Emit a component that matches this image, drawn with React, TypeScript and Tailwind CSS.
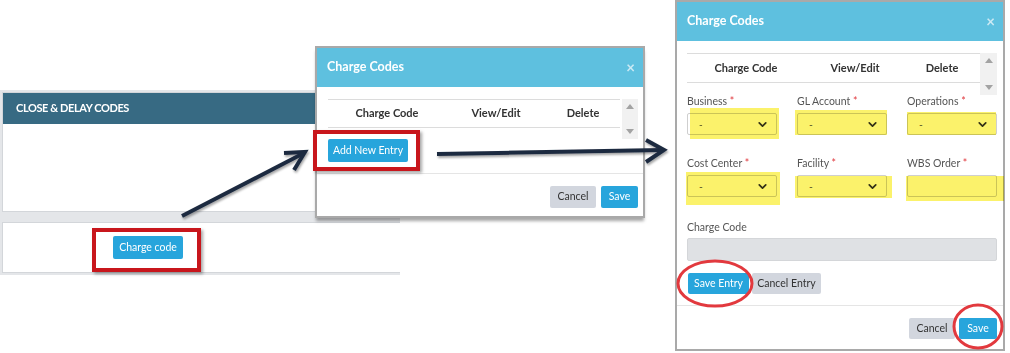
import { ChevronDown } from 'lucide-react'

const blueBtn = 'flex items-center justify-center rounded-[2px] bg-[#27a5dc] text-white text-[10.5px]'
const grayBtn = 'flex items-center justify-center rounded-[2px] bg-[#d2d6de] text-[#333] text-[10.5px]'

function ScrollBar({ h }: { h: string }) {
  return (
    <div className={`flex flex-col items-center justify-between bg-[#f1f1f1] py-[5px] ${h}`}>
      <svg width="8" height="5" viewBox="0 0 8 5">
        <path d="M0 5 L4 0 L8 5 Z" fill="#a3a3a3" />
      </svg>
      <svg width="8" height="5" viewBox="0 0 8 5">
        <path d="M0 0 L4 5 L8 0 Z" fill="#a3a3a3" />
      </svg>
    </div>
  )
}

function TableHead({ h }: { h: string }) {
  return (
    <div className={`flex flex-1 items-center border-y border-[#dcdcdc] text-[11px] font-bold text-[#333] ${h}`}>
      <div className="w-[118px] text-center">Charge Code</div>
      <div className="w-[100px] text-center">View/Edit</div>
      <div className="w-[74px] text-center">Delete</div>
    </div>
  )
}

function ModalHeader() {
  return (
    <div className="flex h-[39px] items-center justify-between bg-[#5ec0df] pl-[10px] pr-[8px]">
      <span className="text-[12.5px] font-bold text-white">Charge Codes</span>
      <span className="text-[15px] font-bold leading-none text-[#cdeaf4]">×</span>
    </div>
  )
}

function Label({ text, req = true }: { text: string; req?: boolean }) {
  return (
    <div className="h-[12px] text-[10.5px] leading-[12px] text-[#555]">
      {text}
      {req && <span className="text-[#e0393e]"> *</span>}
    </div>
  )
}

// yellow marker highlight laid over the field
function Marker({ cls }: { cls: string }) {
  return <div className={`pointer-events-none absolute bg-[#fbf26b] mix-blend-multiply ${cls}`} />
}

function Select({ mark }: { mark: string }) {
  return (
    <div className="relative">
      <div className="flex h-[22px] items-center justify-between rounded-[2px] border border-[#cfcfcf] bg-white pl-[11px] pr-[7px] text-[10px] text-[#444]">
        <span>-</span>
        <ChevronDown size={13} strokeWidth={3.2} color="#333" />
      </div>
      <Marker cls={mark} />
    </div>
  )
}

function ClosePanel() {
  return (
    <div className="absolute left-0 top-[90px] flex w-[400px] flex-col gap-[10px] bg-[#e4e6e9] py-[2px] pl-[2px]">
      <div className="border border-[#d3d6da] bg-white">
        <div className="flex h-[31px] items-center bg-[#376a83] pl-[13px] text-[11px] font-bold tracking-[-0.4px] text-white">
          CLOSE &amp; DELAY CODES
        </div>
        <div className="h-[87px]" />
      </div>
      <div className="flex h-[51px] items-center border border-r-0 border-[#d3d6da] bg-white pl-[110px]">
        <button className={`${blueBtn} h-[23px] w-[70px]`}>Charge code</button>
      </div>
    </div>
  )
}

function SmallModal() {
  return (
    <div className="absolute left-[315px] top-[46px] flex h-[172px] w-[330px] flex-col border-2 border-[#a9a9a9] bg-white shadow-[0_4px_3px_-1px_rgba(0,0,0,0.35)]">
      <ModalHeader />
      <div className="pl-[11px] pr-[5px] pt-[12px] pb-[11px]">
        <div className="flex items-start gap-[2px]">
          <TableHead h="h-[29px]" />
          <div className="w-[16px]">
            <ScrollBar h="h-[40px]" />
          </div>
        </div>
        <button className={`${blueBtn} h-[23px] w-[80px]`}>Add New Entry</button>
      </div>
      <div className="flex justify-end gap-[5px] border-t border-[#e5e5e5] pr-[5px] pt-[12px]">
        <button className={`${grayBtn} h-[22px] w-[46px]`}>Cancel</button>
        <button className={`${blueBtn} h-[22px] w-[37px]`}>Save</button>
      </div>
    </div>
  )
}

function LargeModal() {
  return (
    <div className="absolute left-[675px] top-0 flex h-[351px] w-[330px] flex-col border-2 border-[#a9a9a9] bg-white">
      <ModalHeader />
      <div className="flex flex-col pl-[10px] pr-[6px] pt-[12px] pb-[11px]">
        <div className="flex items-start">
          <TableHead h="h-[30px]" />
          <div className="w-[17px]">
            <ScrollBar h="h-[42px]" />
          </div>
        </div>
        <div className="grid grid-cols-3 gap-x-[20px]">
          <div className="flex flex-col gap-[6px]">
            <Label text="Business" />
            <Select mark="left-[3px] -right-[2px] -top-[5px] -bottom-[4px]" />
          </div>
          <div className="flex flex-col gap-[6px]">
            <Label text="GL Account" />
            <Select mark="-left-[2px] right-0 -top-[3px] bottom-0" />
          </div>
          <div className="flex flex-col gap-[6px]">
            <Label text="Operations" />
            <Select mark="left-0 right-[1px] -top-[1px] bottom-0" />
          </div>
        </div>
        <div className="mt-[22px] grid grid-cols-3 gap-x-[20px]">
          <div className="flex flex-col gap-[6px]">
            <Label text="Cost Center" />
            <Select mark="-left-[1px] -right-[3px] -top-[3px] -bottom-[8px]" />
          </div>
          <div className="flex flex-col gap-[6px]">
            <Label text="Facility" />
            <Select mark="-left-[2px] -right-[5px] top-[1px] -bottom-[1px]" />
          </div>
          <div className="flex flex-col gap-[6px]">
            <Label text="WBS Order" />
            <div className="relative">
              <div className="h-[22px] rounded-[2px] border border-[#cfcfcf] bg-white" />
              <Marker cls="-left-[1px] -right-[7px] top-[1px] -bottom-[4px]" />
            </div>
          </div>
        </div>
        <div className="mt-[24px] flex flex-col gap-[5px]">
          <Label text="Charge Code" req={false} />
          <div className="h-[23px] rounded-[2px] border border-[#d4d6d9] bg-[#dfe1e4]" />
        </div>
        <div className="mt-[12px] flex gap-[3px] pl-[1px]">
          <button className={`${blueBtn} h-[21px] w-[61px]`}>Save Entry</button>
          <button className={`${grayBtn} h-[21px] w-[69px]`}>Cancel Entry</button>
        </div>
      </div>
      <div className="flex justify-end gap-[4px] border-t border-[#e5e5e5] pr-[6px] pt-[12px]">
        <button className={`${grayBtn} h-[21px] w-[46px]`}>Cancel</button>
        <button className={`${blueBtn} h-[21px] w-[38px]`}>Save</button>
      </div>
    </div>
  )
}

function Annotations() {
  return (
    <>
      <div className="pointer-events-none absolute left-[92px] top-[228px] h-[44px] w-[109px] border-4 border-[#c8161c] shadow-[2px_2px_3px_rgba(0,0,0,0.35)]" />
      <div className="pointer-events-none absolute left-[313px] top-[130px] h-[41px] w-[107px] border-4 border-[#c8161c] shadow-[2px_2px_3px_rgba(0,0,0,0.35)]" />
      <svg className="pointer-events-none absolute left-0 top-0" width="1010" height="353" viewBox="0 0 1010 353">
        <defs>
          <filter id="sh" x="-10%" y="-10%" width="120%" height="130%">
            <feDropShadow dx="1" dy="2" stdDeviation="1" floodOpacity="0.35" />
          </filter>
        </defs>
        <g stroke="#1e2b40" strokeWidth="4" fill="none" strokeLinejoin="miter" filter="url(#sh)">
          <line x1="182" y1="216" x2="304" y2="153" />
          <polyline points="284,153 305,152 294,170" />
          <line x1="437" y1="154" x2="662" y2="150" />
          <polyline points="646,140 664,150 646,162" />
        </g>
        <g stroke="#e2393e" strokeWidth="3" fill="none">
          <ellipse cx="715" cy="283.5" rx="37" ry="22.5" />
          <ellipse cx="978" cy="326.5" rx="24" ry="21.5" />
        </g>
      </svg>
    </>
  )
}

export default function App() {
  return (
    <div className="relative h-[353px] w-[1010px] overflow-hidden bg-white font-['Lato',sans-serif]">
      <ClosePanel />
      <SmallModal />
      <LargeModal />
      <Annotations />
    </div>
  )
}
